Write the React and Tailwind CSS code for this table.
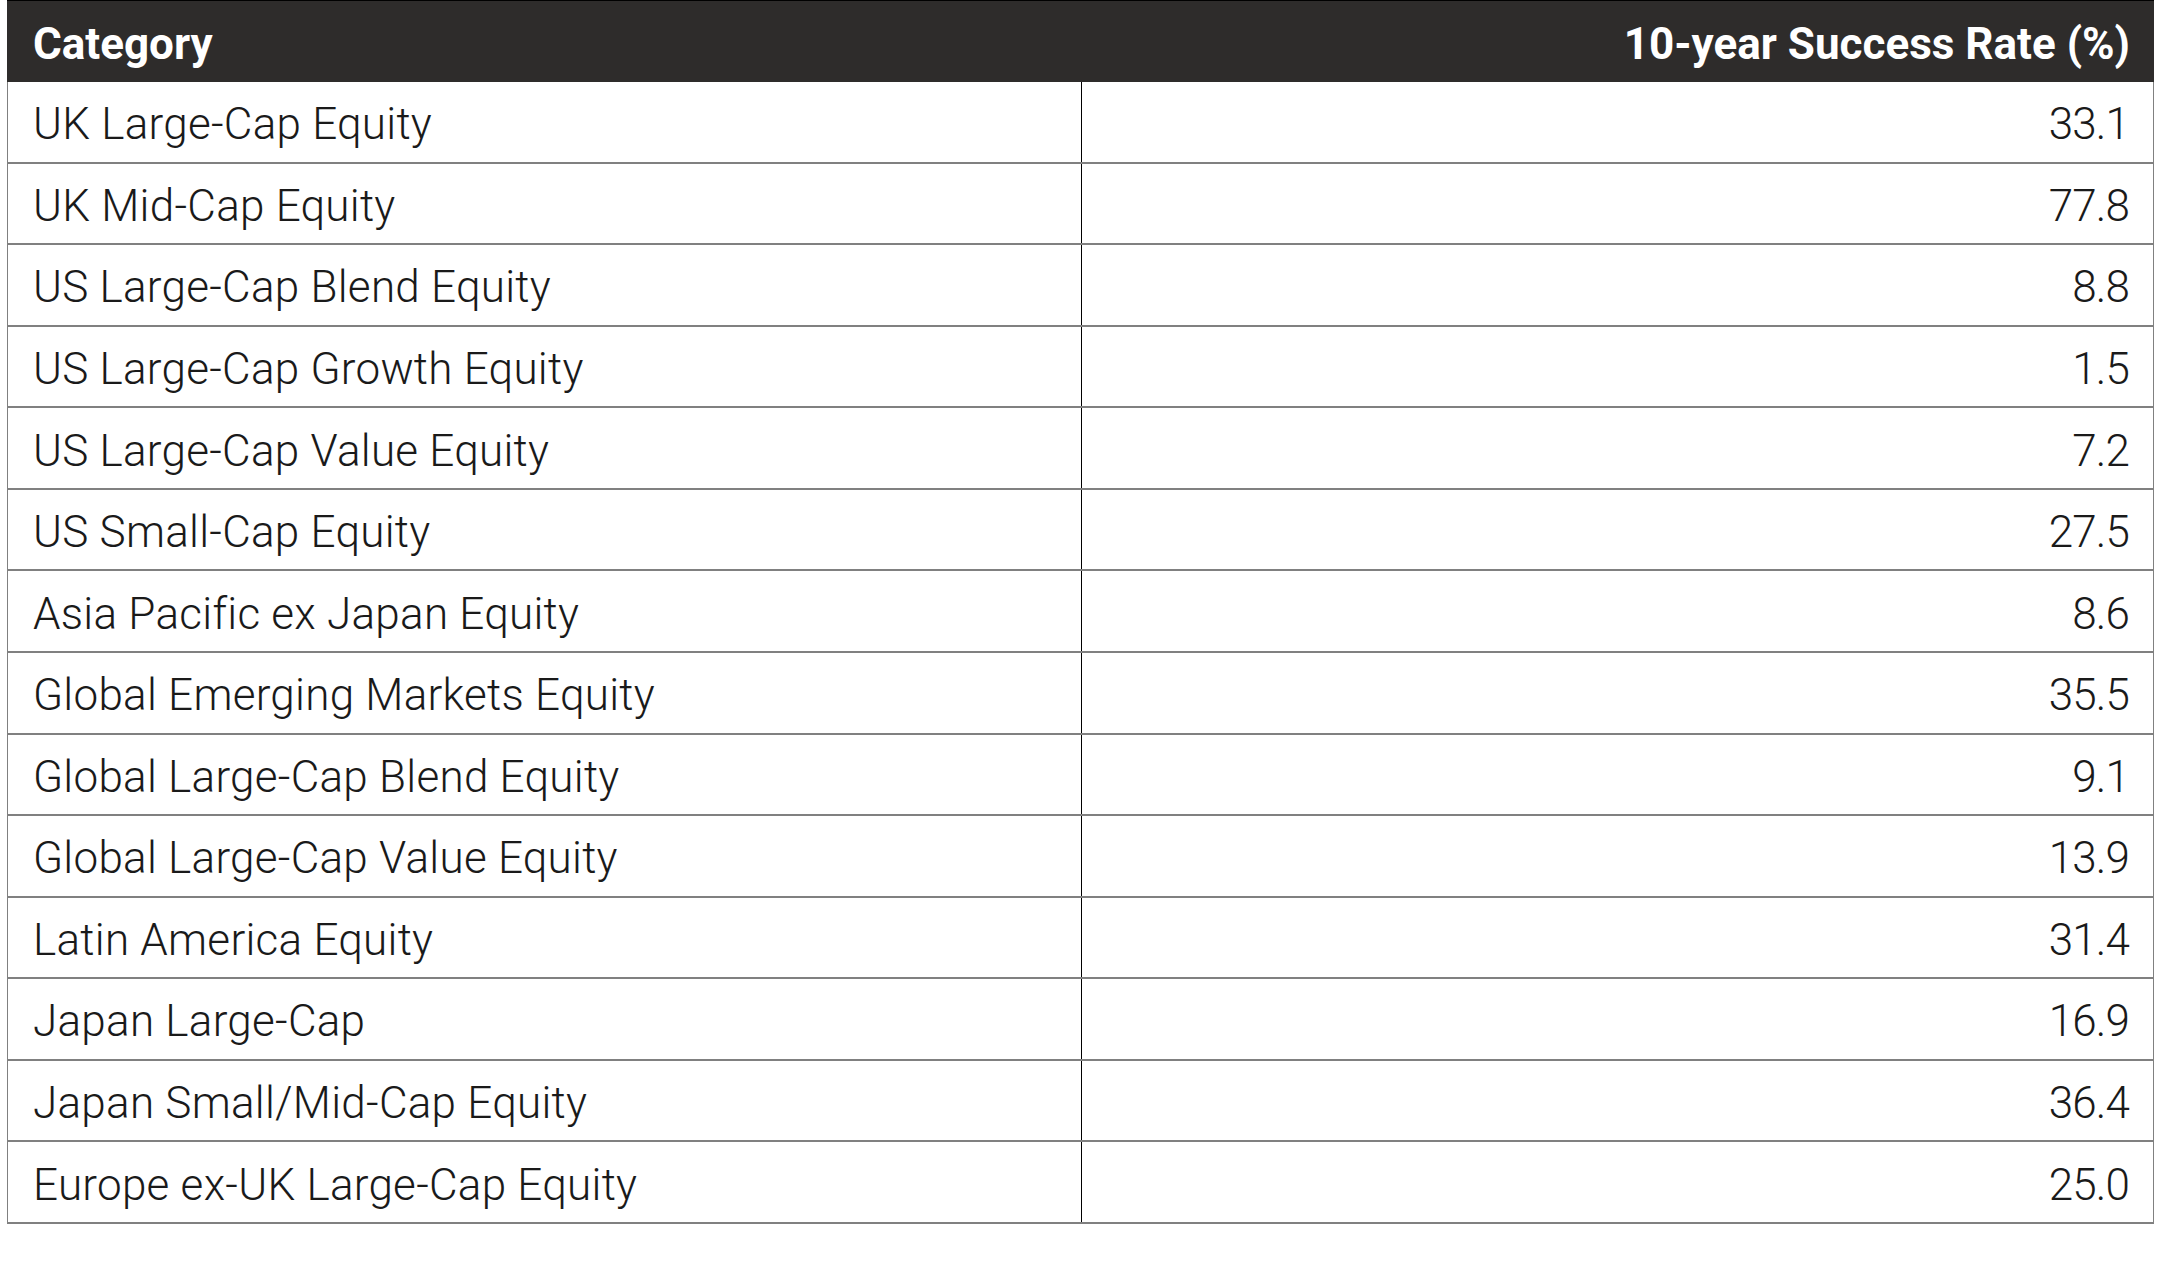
import React from "react";

const rows = [
  ["UK Large-Cap Equity", "33.1"],
  ["UK Mid-Cap Equity", "77.8"],
  ["US Large-Cap Blend Equity", "8.8"],
  ["US Large-Cap Growth Equity", "1.5"],
  ["US Large-Cap Value Equity", "7.2"],
  ["US Small-Cap Equity", "27.5"],
  ["Asia Pacific ex Japan Equity", "8.6"],
  ["Global Emerging Markets Equity", "35.5"],
  ["Global Large-Cap Blend Equity", "9.1"],
  ["Global Large-Cap Value Equity", "13.9"],
  ["Latin America Equity", "31.4"],
  ["Japan Large-Cap", "16.9"],
  ["Japan Small/Mid-Cap Equity", "36.4"],
  ["Europe ex-UK Large-Cap Equity", "25.0"],
];

const App = () => {
  return (
    <div className="w-[2161px] h-[1264px] bg-white pl-[7px] pr-[7px]" style={{ fontFamily: "Roboto, 'Liberation Sans', sans-serif" }}>
      <div className="w-[2147px]">
        <div className="h-[82px] bg-[#2e2c2b] border-t border-black flex items-center justify-between pl-[26px] pr-[24px] pt-[4px] text-white font-bold text-[44px]">
          <span>Category</span>
          <span>10-year Success Rate (%)</span>
        </div>
        <div className="border-l border-r border-[#808080]">
          {rows.map(([name, value]) => (
            <div key={name} className="grid grid-cols-[1074px_1fr] h-[81.57px] border-b-2 border-[#808080] text-[44px] font-light text-[#1a1a1a]">
              <div className="flex items-center pl-[25px] pt-[5px] border-r border-black tracking-[0.006em]">{name}</div>
              <div className="flex items-center justify-end pr-[24px] pt-[5px] tracking-[-0.02em]">{value}</div>
            </div>
          ))}
        </div>
      </div>
    </div>
  );
};

export default App;
